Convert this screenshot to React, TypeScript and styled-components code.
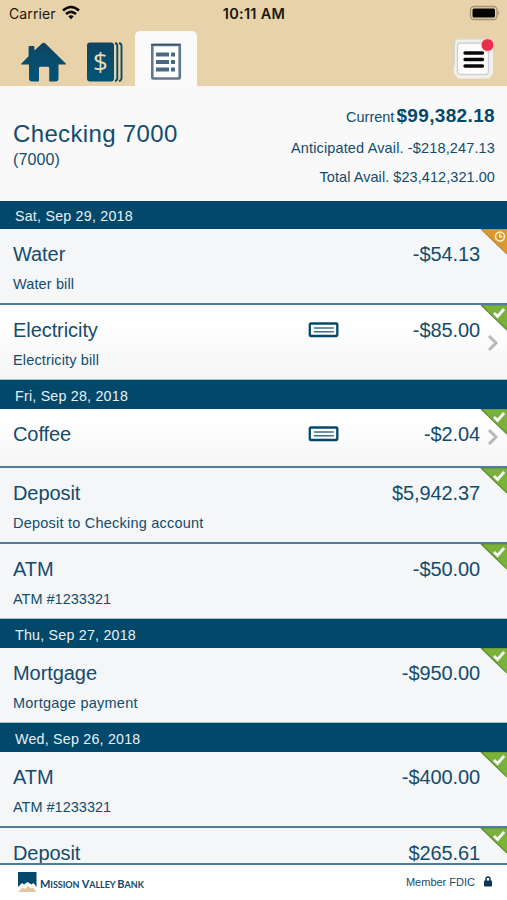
import React from "react";
import styled, { createGlobalStyle, css } from "styled-components";

const navy = "#02486a";
const ink = "#134c6c";

const GlobalStyle = createGlobalStyle`
  * { box-sizing: border-box; }
  html, body { margin: 0; background: #fff; overflow: hidden; }
  body { font-family: "Liberation Sans", Arial, sans-serif; color: ${ink}; }
`;

const Screen = styled.div`
  width: 507px;
  height: 900px;
  display: flex;
  flex-direction: column;
  overflow: hidden;
`;

const Header = styled.header`
  height: 86px;
  flex: none;
  background: #e8d2aa;
`;

const StatusBar = styled.div`
  height: 31px;
  padding: 4px 7px 0 9px;
  display: grid;
  grid-template-columns: 1fr auto 1fr;
  font: 500 14px/20px Inter, sans-serif;
  color: #1b1710;
`;

const Carrier = styled.div`
  display: flex;
  gap: 6px;
  font-weight: 400;
  letter-spacing: 0.1px;
`;

const Clock = styled.div`
  margin-right: 1px;
  font-size: 14.5px;
  font-weight: 600;
  letter-spacing: 0.3px;
`;

const Battery = styled.svg`
  justify-self: end;
  margin-top: 1px;
`;

const Tabs = styled.nav`
  height: 55px;
  display: flex;
  align-items: flex-start;
  padding-left: 20px;
`;

const TabIcon = styled.div<{ $gap: number }>`
  margin: 10px ${(p) => p.$gap}px 0 0;
  height: 42px;
`;

const ActiveTab = styled.div`
  width: 62px;
  height: 55px;
  padding: 12px 0 0 16px;
  background: #fafafa;
  border-radius: 5px 5px 0 0;
`;

const MenuButton = styled.button`
  margin: 4px 12px 0 auto;
  padding: 0;
  border: 0;
  background: none;
  height: 46px;
`;

const Summary = styled.section`
  height: 115px;
  flex: none;
  display: flex;
  justify-content: space-between;
  padding: 15px 12px 0 13px;
  background: #f9f9f9;
`;

const AccountName = styled.h1`
  margin: 19px 0 0;
  font-size: 24px;
  line-height: 28px;
  font-weight: 400;
  letter-spacing: 0.35px;
`;

const AccountNumber = styled.div`
  font-size: 16px;
  line-height: 22px;
  margin-top: 1px;
  letter-spacing: 0.1px;
`;

const Balance = styled.div<{ $height: number; $spacing?: number }>`
  height: ${(p) => p.$height}px;
  font-size: 14.5px;
  line-height: 30px;
  letter-spacing: ${(p) => p.$spacing ?? 0}px;
  text-align: right;
  white-space: nowrap;
  strong {
    margin-left: 2px;
    font-size: 19px;
    letter-spacing: 0.35px;
    color: ${navy};
  }
`;

const List = styled.main`
  height: 662px;
  flex: none;
  overflow: hidden;
`;

const DateBar = styled.div<{ $first?: boolean }>`
  height: ${(p) => (p.$first ? 28 : 29)}px;
  padding-left: 15px;
  font-size: 14.25px;
  line-height: ${(p) => (p.$first ? 30 : 32)}px;
  letter-spacing: 0.22px;
  color: #e9f0f4;
  background: ${navy};
`;

const Row = styled.article<{ $link?: boolean; $line?: boolean; $short?: boolean }>`
  position: relative;
  height: ${(p) => (p.$short ? 59 : p.$line ? 76 : 75)}px;
  padding: 13px 27px 0 13px;
  background: ${(p) => (p.$link ? "linear-gradient(#fff 20%, #f4f5f6)" : "#f4f6f8")};
  ${(p) =>
    p.$line
      ? css`
          border-bottom: 2px solid #4d7f99;
        `
      : css`
          border-bottom: 1px solid #a9c0cc;
        `}
`;

const RowTop = styled.div`
  display: flex;
  align-items: center;
  height: 24px;
  font-size: 20px;
  line-height: 24px;
`;

const Title = styled.div`
  width: 295px;
  letter-spacing: -0.07px;
`;

const Amount = styled.div`
  margin-left: auto;
  letter-spacing: -0.1px;
`;

const Memo = styled.div<{ $spacing: number }>`
  margin-top: 9px;
  font-size: 14.5px;
  line-height: 18px;
  letter-spacing: ${(p) => p.$spacing}px;
`;

const Corner = styled.svg`
  position: absolute;
  top: 0;
  right: 0;
`;

const Chevron = styled.svg<{ $short?: boolean }>`
  position: absolute;
  right: 7px;
  top: ${(p) => (p.$short ? 19 : 29)}px;
`;

const Footer = styled.footer`
  height: 37px;
  flex: none;
  display: flex;
  align-items: flex-start;
  padding: 7px 15px 0 18px;
  border-top: 2px solid #4d7f99;
  background: #fff;
`;

const BankName = styled.div`
  margin: 5px 0 0 3px;
  font: 700 9px/14px Lato, sans-serif;
  letter-spacing: -0.05px;
  text-transform: uppercase;
  color: #164666;
  white-space: nowrap;
  span { font-size: 11px; }
`;

const Member = styled.div`
  margin: 2px 9px 0 auto;
  font-size: 11px;
  line-height: 16px;
`;

const Lock = styled.svg`
  margin-top: 4px;
`;

const HomeIcon = () => (
  <svg width="47" height="42" viewBox="0 0 47 42">
    <defs>
      <linearGradient id="blue" x2="0" y2="1">
        <stop stopColor="#104461" />
        <stop offset="1" stopColor="#005579" />
      </linearGradient>
    </defs>
    <path
      d="M9.500 5h4q.9 0 .9.900v3.700L22 2.500q1.700-1.500 3.400 0L46 22.800q.6.800-.5.800H38.500V37.500q0 3-3 3H30q-.8 0-.8-.8V27q0-1.300-1.300-1.300h-7.600q-1.300 0-1.300 1.300v12.700q0 .8-.8.800H12q-3 0-3-3V23.600H1.700q-1.100 0-.5-.8L8.600 15.300V5.900q0-.9.900-.9z"
      fill="url(#blue)"
    />
  </svg>
);

const AccountsText = styled.text`
  font: 26px "Open Sans", sans-serif;
  fill: #eadcb9;
`;

const AccountsIcon = () => (
  <svg width="38" height="42" viewBox="0 0 38 42">
    <rect x="1" y="1.500" width="27" height="39" rx="3" fill="url(#blue)" />
    <path d="M29 2q2.300.5 2.300 3v32q0 2.500-2.300 3M33 2q2.500.5 2.500 3v32q0 2.500-2.500 3" fill="none" stroke="#0b4b69" strokeWidth="1.900" />
    <AccountsText x="14.500" y="30" textAnchor="middle">$</AccountsText>
  </svg>
);

const ListIcon = () => (
  <svg width="31" height="38" viewBox="0 0 31 38">
    <rect x="1.250" y="2" width="27.500" height="33.500" rx="1.500" fill="#fff" stroke="#61788f" strokeWidth="2.700" />
    <path d="M0 1.500h30" stroke="#36536d" strokeWidth="1.500" />
    <path d="M5 11.500h13M5 19h13M5 26.500h13" stroke="#4d6882" strokeWidth="3.800" />
    <path d="M20 11.500h4M20 19h4M20 26.500h4" stroke="#4d6882" strokeWidth="4.200" />
  </svg>
);

const MenuIcon = () => (
  <svg width="43" height="46" viewBox="0 0 43 46">
    <path d="M6 3.500h31l4 4v31l-4 5H6l-4-5V8q0-4.500 4-4.500z" fill="#f1f0ee" />
    <path d="M2.300 30V9q0-5 5-5H34" fill="none" stroke="#d3d1ca" strokeWidth="1.200" />
    <rect x="5.500" y="8" width="31" height="31.500" rx="3" fill="#fcfcfc" stroke="#cfcfd0" strokeWidth="1.300" />
    <path d="M13 18H30.500M13 24.500H30.500M13 31H30.500" stroke="#080808" strokeWidth="3.300" strokeLinecap="round" />
    <circle cx="35.500" cy="10" r="6.300" fill="#e72e4b" stroke="#f0c4b5" />
  </svg>
);

const CheckIcon = () => (
  <svg width="31" height="16" viewBox="0 0 31 16">
    <rect x="1.800" y="1.500" width="27.500" height="12.500" rx="1" fill="#fcfdfd" stroke={navy} strokeWidth="2.300" />
    <path d="M5.800 6h20M5.800 9.800h20" stroke="#41708c" strokeWidth="1.500" />
  </svg>
);

const StatusCorner = ({ pending }: { pending?: boolean }) => (
  <Corner width="27" height="26" viewBox="0 0 27 26">
    <path d="M1 0h26v25z" fill={pending ? "#dc982f" : "#7ab239"} />
    <path d="M1 0h26M1 0l26 25" stroke={pending ? "#b98b3e" : "#5c8b34"} strokeWidth="1.200" />
    {pending ? (
      <g fill="none" stroke="#fff1cf" strokeWidth="1.500">
        <circle cx="20" cy="7.500" r="4.500" />
        <path d="M19.800 4.500v3.300h2.500" />
      </g>
    ) : (
      <path d="M14 8l3.600 3.500 6.500-7.500" fill="none" stroke="#fff" strokeWidth="2.800" />
    )}
  </Corner>
);

type Entry = {
  title: string;
  amount: string;
  memo?: string;
  spacing?: number;
  link?: boolean;
  pending?: boolean;
};

const groups: { date: string; entries: Entry[] }[] = [
  {
    date: "Sat, Sep 29, 2018",
    entries: [
      { title: "Water", amount: "-$54.13", memo: "Water bill", spacing: 0.12, pending: true },
      { title: "Electricity", amount: "-$85.00", memo: "Electricity bill", spacing: 0.14, link: true },
    ],
  },
  {
    date: "Fri, Sep 28, 2018",
    entries: [
      { title: "Coffee", amount: "-$2.04", link: true },
      { title: "Deposit", amount: "$5,942.37", memo: "Deposit to Checking account", spacing: 0.22 },
      { title: "ATM", amount: "-$50.00", memo: "ATM #1233321" },
    ],
  },
  {
    date: "Thu, Sep 27, 2018",
    entries: [{ title: "Mortgage", amount: "-$950.00", memo: "Mortgage payment", spacing: 0.24 }],
  },
  {
    date: "Wed, Sep 26, 2018",
    entries: [
      { title: "ATM", amount: "-$400.00", memo: "ATM #1233321" },
      { title: "Deposit", amount: "$265.61" },
    ],
  },
];

export default function App() {
  return (
    <>
      <GlobalStyle />
      <Screen>
        <Header>
          <StatusBar>
            <Carrier>
              Carrier
              <svg width="18" height="16" viewBox="0 0 18 16">
                <g fill="none" stroke="#090806" strokeWidth="2.600">
                  <path d="M1 6.500q8-7 16 0" />
                  <path d="M4 10q5-4.300 10 0" />
                </g>
                <path d="M6.300 12.300q2.700-2.200 5.400 0L9 15.200z" fill="#090806" />
              </svg>
            </Carrier>
            <Clock>10:11 AM</Clock>
            <Battery width="31" height="16" viewBox="0 0 31 16">
              <rect x="1.500" y="1.500" width="26.500" height="13" rx="3.500" fill="none" stroke="#a29373" strokeWidth="1.300" />
              <rect x="3.500" y="3.500" width="22.500" height="9" rx="1.500" fill="#050505" />
              <path d="M29 5.500q2 2.500 0 5z" fill="#a29373" />
            </Battery>
          </StatusBar>
          <Tabs>
            <TabIcon $gap={19}><HomeIcon /></TabIcon>
            <TabIcon $gap={11}><AccountsIcon /></TabIcon>
            <ActiveTab><ListIcon /></ActiveTab>
            <MenuButton aria-label="Menu"><MenuIcon /></MenuButton>
          </Tabs>
        </Header>
        <Summary>
          <div>
            <AccountName>Checking 7000</AccountName>
            <AccountNumber>(7000)</AccountNumber>
          </div>
          <div>
            <Balance $height={32}>Current<strong>$99,382.18</strong></Balance>
            <Balance $height={29} $spacing={0.14}>Anticipated Avail. -$218,247.13</Balance>
            <Balance $height={29} $spacing={0.06}>Total Avail. $23,412,321.00</Balance>
          </div>
        </Summary>
        <List>
          {groups.map((group, g) => (
            <React.Fragment key={group.date}>
              <DateBar $first={g === 0}>{group.date}</DateBar>
              {group.entries.map((entry, i) => (
                <Row
                  key={i}
                  $link={entry.link}
                  $short={entry.title === "Coffee"}
                  $line={i < group.entries.length - 1}
                >
                  <RowTop>
                    <Title>{entry.title}</Title>
                    {entry.link && <CheckIcon />}
                    <Amount>{entry.amount}</Amount>
                  </RowTop>
                  {entry.memo && <Memo $spacing={entry.spacing ?? 0}>{entry.memo}</Memo>}
                  <StatusCorner pending={entry.pending} />
                  {entry.link && (
                    <Chevron $short={!entry.memo} width="14" height="18" viewBox="0 0 14 18">
                      <path d="M3 2l7 7-7 7" fill="none" stroke="#b9b9bb" strokeWidth="3" />
                    </Chevron>
                  )}
                </Row>
              ))}
            </React.Fragment>
          ))}
        </List>
        <Footer>
          <svg width="19" height="21" viewBox="0 0 19 21">
            <path d="M0 0h18.500v15l-3-4-2 1.500L9.500 10 6 12.500 4 11l-4 4z" fill={navy} />
            <path d="M0 20l4.500-4.500L7 17l3-3 3 2.500 2-1 3.500 4.500z" fill="#e1c6a1" />
          </svg>
          <BankName>
            <span>M</span>ission <span>V</span>alley <span>B</span>ank
          </BankName>
          <Member>Member FDIC</Member>
          <Lock width="8" height="11" viewBox="0 0 8 11">
            <path d="M2 5V3q0-2 2-2t2 2v2" fill="none" stroke="#0c3553" strokeWidth="1.500" />
            <rect y="4.500" width="8" height="6" rx=".7" fill="#0c3553" />
          </Lock>
        </Footer>
      </Screen>
    </>
  );
}
